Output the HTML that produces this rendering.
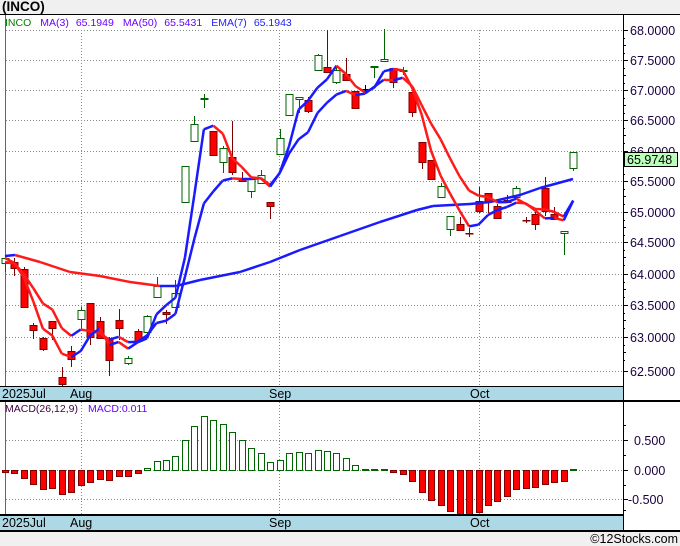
<!DOCTYPE html>
<html><head><meta charset="utf-8"><style>
html,body{margin:0;padding:0;background:#f0f0f0;width:680px;height:546px;overflow:hidden}
svg{display:block}
text{font-family:"Liberation Sans",sans-serif}
</style></head><body>
<svg id="s" width="680" height="546" xmlns="http://www.w3.org/2000/svg">
<rect x="0" y="14" width="680" height="516" fill="#fff"/>
<text x="2" y="11" font-size="13.5" font-weight="bold" fill="#000">(INCO)</text>
<rect x="0" y="14" width="680" height="1" fill="#000"/>
<g fill="#999">
<rect x="5" y="30" width="618" height="1" fill="url(#dh)"/>
</g>
<defs>
<pattern id="dh" width="3" height="1" patternUnits="userSpaceOnUse"><rect width="1" height="1" fill="#888"/></pattern>
<pattern id="dv" width="1" height="3" patternUnits="userSpaceOnUse"><rect width="1" height="1" fill="#888"/></pattern>
</defs>
<g>
<rect x="5" y="60" width="618" height="1" fill="url(#dh)"/>
<rect x="5" y="90" width="618" height="1" fill="url(#dh)"/>
<rect x="5" y="120" width="618" height="1" fill="url(#dh)"/>
<rect x="5" y="151" width="618" height="1" fill="url(#dh)"/>
<rect x="5" y="181" width="618" height="1" fill="url(#dh)"/>
<rect x="5" y="212" width="618" height="1" fill="url(#dh)"/>
<rect x="5" y="242" width="618" height="1" fill="url(#dh)"/>
<rect x="5" y="274" width="618" height="1" fill="url(#dh)"/>
<rect x="5" y="305" width="618" height="1" fill="url(#dh)"/>
<rect x="5" y="337" width="618" height="1" fill="url(#dh)"/>
<rect x="5" y="371" width="618" height="1" fill="url(#dh)"/>
<rect x="5" y="440" width="618" height="1" fill="url(#dh)"/>
<rect x="5" y="470" width="618" height="1" fill="url(#dh)"/>
<rect x="5" y="499" width="618" height="1" fill="url(#dh)"/>
<rect x="81" y="30" width="1" height="357" fill="url(#dv)"/>
<rect x="279" y="30" width="1" height="357" fill="url(#dv)"/>
<rect x="479" y="30" width="1" height="357" fill="url(#dv)"/>
<rect x="81" y="401" width="1" height="114" fill="url(#dv)"/>
<rect x="279" y="401" width="1" height="114" fill="url(#dv)"/>
<rect x="479" y="401" width="1" height="114" fill="url(#dv)"/>
<rect x="5" y="15" width="1" height="372" fill="#666"/>
<rect x="5" y="401" width="1" height="114" fill="#666"/>
</g>
<text x="5" y="26" font-size="10.5"><tspan fill="#008000">INCO</tspan><tspan fill="#6a00ff" dx="9">MA(3)</tspan><tspan fill="#6a00ff" dx="7">65.1949</tspan><tspan fill="#6a00ff" dx="9">MA(50)</tspan><tspan fill="#6a00ff" dx="7">65.5431</tspan><tspan fill="#2020ff" dx="9">EMA(7)</tspan><tspan fill="#2020ff" dx="7">65.1943</tspan></text>
<g id="g"></g>
</svg>
<script>
var g=document.getElementById('g'),h='';
function L(x1,y1,x2,y2,c,w,d,aa){h+='<line x1="'+x1+'" y1="'+y1+'" x2="'+x2+'" y2="'+y2+'" stroke="'+c+'" stroke-width="'+(w||1)+'"'+(d?' stroke-dasharray="'+d+'"':'')+(aa?'':' shape-rendering="crispEdges"')+'/>';}
function B(x,y,w,hh,c){h+='<rect x="'+x+'" y="'+y+'" width="'+w+'" height="'+hh+'" fill="'+c+'"/>';}
function R(x,y,w,hh,f,s){h+='<rect x="'+x+'" y="'+y+'" width="'+w+'" height="'+hh+'" fill="'+f+'" stroke="'+s+'" shape-rendering="crispEdges"/>';}
function T(x,y,t,c,fs,a){h+='<text x="'+x+'" y="'+y+'" font-size="'+(fs||12)+'" fill="'+c+'"'+(a?' text-anchor="'+a+'"':'')+'>'+t+'</text>';}
var gy=[30,60,90,120,151,181,212,242,274,305,337,371],gl=['68.0000','67.5000','67.0000','66.5000','66.0000','65.5000','65.0000','64.5000','64.0000','63.5000','63.0000','62.5000'];
gy.forEach(function(y,i){B(623,y,5,1,'#000');if(i<11){B(623,y+15,3,1,'#000');B(623,y+8,2,1,'#000');B(623,y+23,2,1,'#000');}T(630,y+5,gl[i],'#1a0040',12.5);});
[[440,'0.500'],[470,'0.000'],[499,'-0.500']].forEach(function(a){B(623,a[0],5,1,'#000');T(a[1][0]=='-'?628:634,a[0]+5,a[1],'#1a0040',12.5);});
[425,455,485,510].forEach(function(y){B(623,y,3,1,'#000');});
var C=[[258,263,255,272,'g'],[262,268,258,276,'r'],[269,307,267,307,'r'],[325,330,323,339,'r'],[338,349,337,351,'r'],[321,328,321,340,'r'],[377,384,367,387,'r'],[351,359,346,367,'r'],[310,319,307,329,'g'],[303,337,303,345,'r'],[321,338,317,338,'r'],[338,360,337,376,'r'],[320,328,309,340,'r'],[358,363,356,365,'g'],[331,341,329,343,'r'],[316,332,315,332,'g'],[286,297,277,298,'g'],[312,314,310,324,'r'],[293,307,280,308,'g'],[166,202,166,202,'g'],[124,141,116,141,'g'],[98,99,94,108,'g'],[131,155,131,155,'r'],[148,162,146,173,'g'],[157,172,121,175,'r'],[178,181,172,181,'r'],[179,191,179,198,'g'],[175,183,170,183,'g'],[202,206,202,219,'r'],[138,154,129,154,'g'],[94,115,94,115,'g'],[97,99,97,113,'g'],[100,111,97,113,'r'],[55,70,54,70,'g'],[67,72,30,73,'r'],[70,82,67,84,'g'],[74,80,58,80,'r'],[91,108,91,108,'r'],[89,89,85,93,'k'],[66,67,66,78,'g'],[59,61,29,61,'g'],[68,82,68,88,'r'],[70,70,67,75,'g'],[92,112,92,117,'r'],[142,162,142,169,'r'],[160,179,160,179,'r'],[186,197,183,198,'g'],[216,229,216,236,'g'],[224,230,217,230,'r'],[233,233,228,237,'d'],[201,211,187,213,'r'],[193,201,193,213,'r'],[206,218,204,218,'r'],[200,202,195,202,'r'],[188,197,186,199,'g'],[220,220,217,223,'d'],[214,224,212,230,'r'],[188,211,177,216,'r'],[214,219,207,219,'r'],[231,233,231,255,'g'],[152,168,152,171,'g']];
function X(i){return 5+i*9.47;}
var closes=[];
C.forEach(function(c,i){var x=Math.round(X(i))+.5,t=c[4];
 var col=t=='g'?'#006400':t=='r'?'#800000':t=='d'?'#800000':'#000';
 L(x,c[2],x,c[3],col);
 if(t=='k'||t=='d'){L(x-4,c[0]+.5,x+4,c[0]+.5,col,1.5);}
 else R(x-3.5,c[0]+.5,7,Math.max(1,c[1]-c[0]),t=='g'?'#fff':'#f00',col);
 closes.push(t=='g'?c[0]:c[1]);});
function poly(pts){for(var i=1;i<pts.length;i++){var c=pts[i][1]>pts[i-1][1]+0.3?'#ff1a1a':'#1a1aff';L(pts[i-1][0],pts[i-1][1],pts[i][0],pts[i][1],c,2.5,null,1);}}
var ma3=[],ema=[],e=closes[0];
closes.forEach(function(c,i){var a=i<2?closes.slice(0,i+1):closes.slice(i-2,i+1);var s=0;a.forEach(function(v){s+=v});ma3.push([X(i),s/a.length]);e=i==0?262:e+(c-e)*0.25;ema.push([X(i),e]);});
var ma50=[[5,256],[15,255],[40,262],[70,272],[100,276],[130,282],[160,286],[176,286],[200,280],[240,272],[270,262],[300,250],[340,236],[380,222],[417,210],[433,206],[470,204],[490,202],[520,195],[540,188],[573,179]];
poly(ma50);poly(ema);poly(ma3);
R(624.5,152.5,53,14,'#bbffbb','#000');T(627,164,'65.9748','#000',12.5);
B(0,387,623,13,'#add8e6');B(0,386,623,1,'#000');B(0,400,680,2,'#000');
T(2,398,'2025Jul','#000',12.5);T(70,398,'Aug','#000',12.5);T(269,398,'Sep','#000',12.5);T(470,398,'Oct','#000',12.5);
B(623,15,1,515,'#000');
var M=[-.03,-.045,-.135,-.23,-.32,-.3,-.41,-.38,-.25,-.2,-.16,-.17,-.1,-.1,-.045,.04,.16,.175,.23,.5,.75,.92,.85,.78,.65,.5,.38,.29,.14,.175,.28,.31,.28,.34,.32,.28,.21,.09,.02,.02,.02,-.03,-.06,-.18,-.37,-.5,-.59,-.7,-.755,-.77,-.71,-.6,-.53,-.44,-.33,-.3,-.28,-.23,-.2,-.18,.01];
M.forEach(function(v,i){var x=Math.round(X(i))-3,hh=Math.round(Math.abs(v)*59);
 if(hh<2){B(x,469,7,2,v>0?'#006400':'#c00000');return;}
 if(v>0)R(x+.5,470-hh+.5,6,hh,'#fff','#006400');else R(x+.5,470.5,6,hh,'#f00','#800000');});
T(5,412,'MACD(26,12,9)','#400040',10.5);T(88,412,'MACD:0.011','#6a00ff',10.5);
B(0,515,623,15,'#add8e6');B(0,514,623,2,'#000');B(0,530,680,2,'#000');
T(2,527,'2025Jul','#000',12.5);T(70,527,'Aug','#000',12.5);T(269,527,'Sep','#000',12.5);T(470,527,'Oct','#000',12.5);
T(678,543,'©12Stocks.com','#000',12.5,'end');
g.innerHTML=h;
</script>
</body></html>
